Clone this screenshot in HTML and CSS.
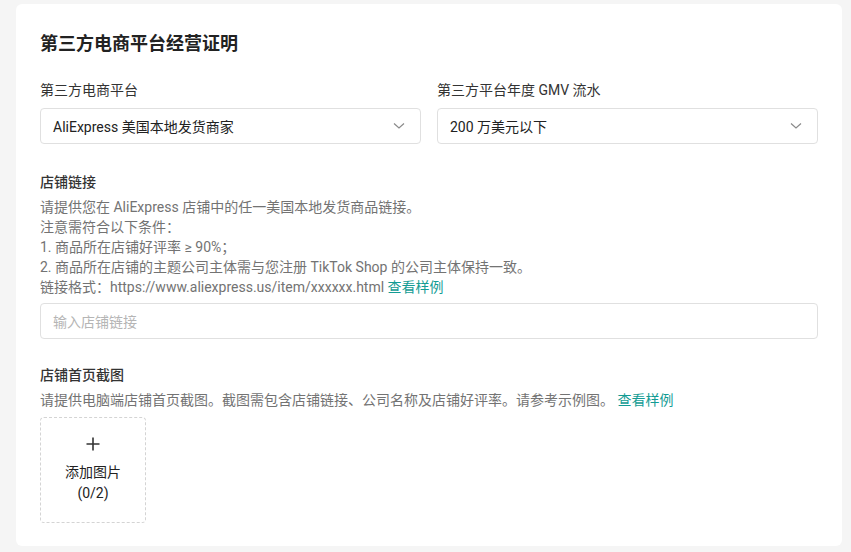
FILE: index.html
```html
<!DOCTYPE html>
<html lang="zh-CN">
<head>
<meta charset="utf-8">
<title>第三方电商平台经营证明</title>
<link rel="stylesheet" href="styles.css">
</head>
<body>
<div class="card">
  <h2 class="title">第三方电商平台经营证明</h2>
  <div class="row">
    <div class="field">
      <div class="label">第三方电商平台</div>
      <div class="select">
        <span>AliExpress 美国本地发货商家</span>
        <svg class="chev" width="12" height="8" viewBox="0 0 12 8"><path d="M1 1.5 L6 6 L11 1.5" fill="none" stroke="#8a8a8a" stroke-width="1.2"/></svg>
      </div>
    </div>
    <div class="field">
      <div class="label">第三方平台年度 GMV 流水</div>
      <div class="select">
        <span>200 万美元以下</span>
        <svg class="chev" width="12" height="8" viewBox="0 0 12 8"><path d="M1 1.5 L6 6 L11 1.5" fill="none" stroke="#8a8a8a" stroke-width="1.2"/></svg>
      </div>
    </div>
  </div>

  <div class="section">
    <div class="sub">店铺链接</div>
    <div class="desc">
      <div>请提供您在 AliExpress 店铺中的任一美国本地发货商品链接。</div>
      <div>注意需符合以下条件：</div>
      <div>1. 商品所在店铺好评率 ≥ 90%；</div>
      <div>2. 商品所在店铺的主题公司主体需与您注册 TikTok Shop 的公司主体保持一致。</div>
      <div>链接格式：https://www.aliexpress.us/item/xxxxxx.html <a class="link">查看样例</a></div>
    </div>
    <div class="input">输入店铺链接</div>
  </div>

  <div class="section second">
    <div class="sub">店铺首页截图</div>
    <div class="desc">
      <div>请提供电脑端店铺首页截图。截图需包含店铺链接、公司名称及店铺好评率。请参考示例图。 <a class="link">查看样例</a></div>
    </div>
    <div class="upload">
      <svg width="14" height="14" viewBox="0 0 14 14"><path d="M7 0.5 V13.5 M0.5 7 H13.5" stroke="#333" stroke-width="1.6"/></svg>
      <div class="up-text">添加图片<br>(0/2)</div>
    </div>
  </div>
</div>
</body>
</html>
```

FILE: styles.css
```css
* { box-sizing: border-box; }
html, body { margin: 0; height: 100%; }
body {
  background: #f5f5f5;
  padding: 4px 9px 6px 16px;
  font-family: "Roboto", "Noto Sans CJK SC", sans-serif;
  color: #222;
}
.card {
  background: #fff;
  border-radius: 6px;
  padding: 25px 24px 24px 24px;
  height: 542px;
}
.title {
  margin: 0;
  font-size: 18px;
  line-height: 30px;
  font-weight: 600;
  color: #222;
}
.row {
  display: grid;
  grid-template-columns: 1fr 1fr;
  column-gap: 16px;
  margin-top: 20px;
}
.label {
  font-size: 14px;
  line-height: 22px;
  color: #333;
  margin-bottom: 7px;
}
.select {
  height: 36px;
  border: 1px solid #e0e0e0;
  border-radius: 4px;
  display: flex;
  align-items: center;
  justify-content: space-between;
  padding: 0 15px 0 12px;
  font-size: 14px;
  color: #222;
}
.chev { display: block; }
.section { margin-top: 27px; }
.section.second { margin-top: 25px; }
.sub {
  font-size: 14px;
  line-height: 22px;
  font-weight: 500;
  color: #333;
  margin-bottom: 4px;
}
.desc {
  font-size: 14px;
  line-height: 20px;
  color: #737373;
}
.link { color: #139c94; text-decoration: none; }
.input {
  margin-top: 6px;
  height: 36px;
  border: 1px solid #e0e0e0;
  border-radius: 4px;
  display: flex;
  align-items: center;
  padding: 0 12px;
  font-size: 14px;
  color: #b5b5b5;
}
.upload {
  margin-top: 7px;
  width: 106px;
  height: 106px;
  border: 1px dashed #d4d4d4;
  border-radius: 4px;
  display: flex;
  flex-direction: column;
  align-items: center;
  justify-content: center;
  gap: 11px;
}
.up-text {
  text-align: center;
  font-size: 14px;
  line-height: 21px;
  color: #222;
}
```
